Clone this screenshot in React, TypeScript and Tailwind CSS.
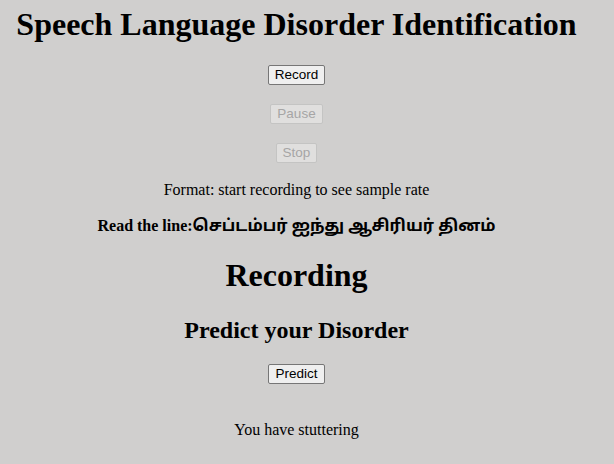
const serif = "font-['Liberation_Serif','Times_New_Roman',serif]";

function Btn({ label, disabled }: { label: string; disabled?: boolean }) {
  return (
    <button
      disabled={disabled}
      className={
        "block h-[20px] rounded-[2px] border px-[6px] font-['Liberation_Sans',Arial,sans-serif] text-[13.5px] leading-[16px] " +
        (disabled
          ? "border-[#c4c4c3] bg-[#e0dfde] text-[#a6a5a5]"
          : "border-[#767676] bg-[#efefef] text-black")
      }
    >
      {label}
    </button>
  );
}

export default function App() {
  return (
    <div className={`min-h-[464px] w-full bg-[#d0cfce] text-black ${serif}`}>
      <div className="flex w-[593px] flex-col items-center text-center">
        <h1 className="mt-[6px] text-[32px] font-bold leading-[36px]">Speech Language Disorder Identification</h1>
        <div className="mt-[23px] flex">
          <Btn label="Record" />
        </div>
        <div className="mt-[19px] flex">
          <Btn label="Pause" disabled />
        </div>
        <div className="mt-[19px] flex">
          <Btn label="Stop" disabled />
        </div>
        <p className="mt-[18px] text-[16px] leading-[18px]">Format: start recording to see sample rate</p>
        <p className="mt-[18px] text-[16px] font-bold leading-[18px]">
          Read the line:
          <span className="font-['Noto_Sans_Tamil','Noto_Sans','DejaVu_Sans',sans-serif] text-[16.3px]">செப்டம்பர் ஐந்து ஆசிரியர் தினம்</span>
        </p>
        <h1 className="mt-[21px] text-[32px] font-bold leading-[36px]">Recording</h1>
        <h2 className="mt-[23px] text-[24px] font-bold leading-[28px]">Predict your Disorder</h2>
        <div className="mt-[20px] flex">
          <Btn label="Predict" />
        </div>
        <p className="mt-[37px] text-[16px] leading-[18px]">You have stuttering</p>
      </div>
    </div>
  );
}
